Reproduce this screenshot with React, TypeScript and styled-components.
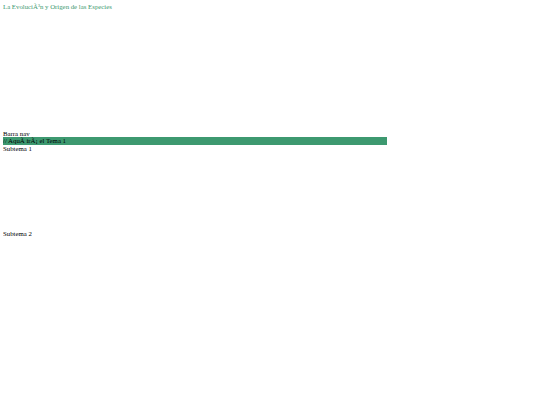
import React from 'react';
import styled, {createGlobalStyle} from 'styled-components';

const GlobalStyle = createGlobalStyle`
  body {
    margin: 3px;
    font-family: "Liberation Serif", serif;
    font-size: 6.8px;
    line-height: 8px;
    color: #000000;
    background-color: #FFFFFF;
  }
`;

const StyledHeader = styled.header`
  height: 126px;
`;
const StyledTitle = styled.div`
  color: #3D9970;
`;
const StyledNav = styled.nav`
  padding-top: 1px;
  height: 7px;
`;
const StyledTopicBar = styled.div`
  width: 384px;
  background-color: #3D9970;
  color: #000000;
`;
const StyledSubtopic = styled.section<{ $height: number }>`
  height: ${(p) => p.$height}px;
`;

const App = () => {
  return (
    <>
      <GlobalStyle />
      <StyledHeader>
        <StyledTitle>La EvoluciÃ³n y Origen de las Especies</StyledTitle>
      </StyledHeader>
      <StyledNav>Barra nav</StyledNav>
      <StyledTopicBar>// AquÃ­ irÃ¡ el Tema 1</StyledTopicBar>
      <StyledSubtopic $height={85}>Subtema 1</StyledSubtopic>
      <StyledSubtopic $height={85}>Subtema 2</StyledSubtopic>
    </>
  );
}

export default App;
